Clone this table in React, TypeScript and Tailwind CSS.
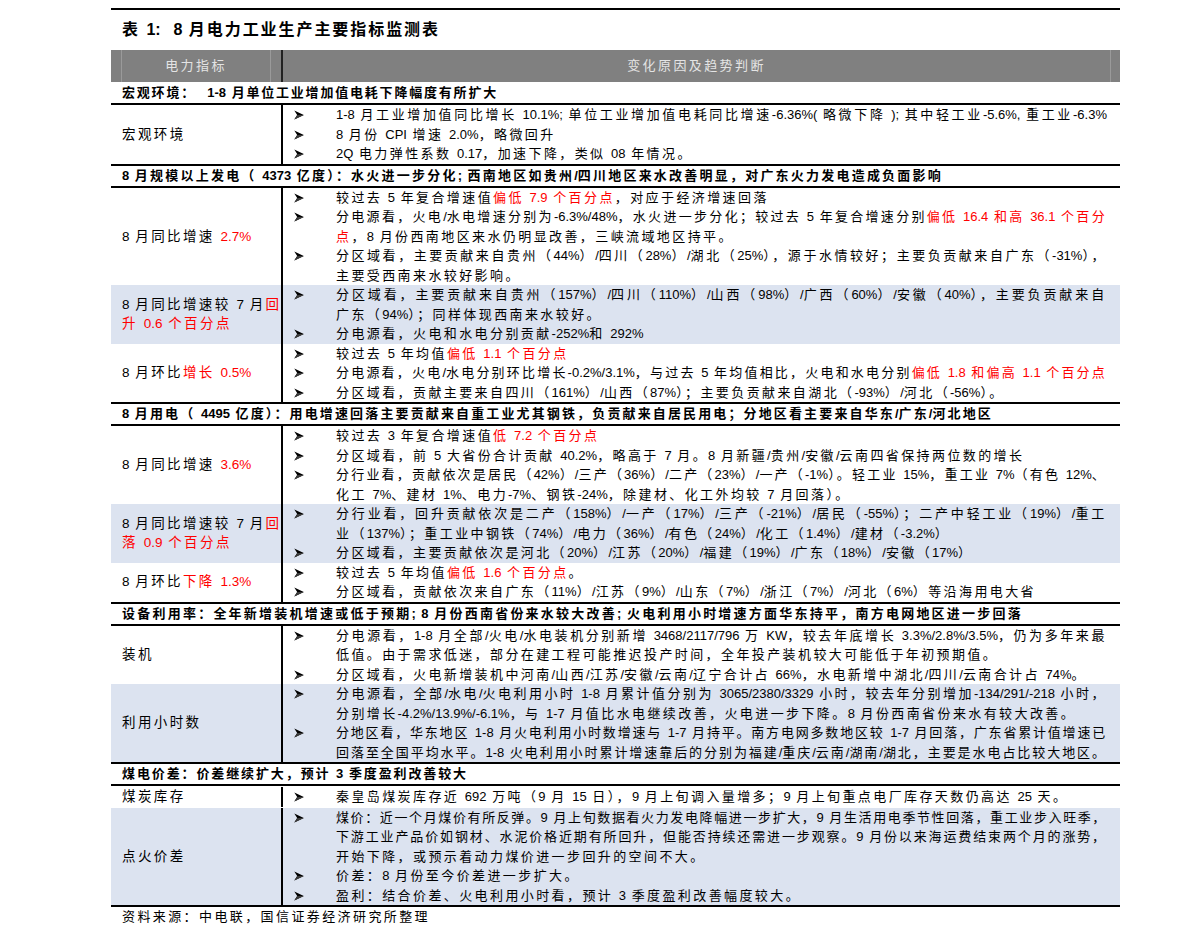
import React, { useLayoutEffect, useRef, useState } from "react";

// one visual line per string; {…} marks red text, a leading "|" marks a line
// that runs to the right edge of the column (justified like the PDF)
type Row = {
  left: string[];
  bullets: string[][];
  blue?: boolean;
  pad?: boolean;
};

type Block = { head: string; w: number; first?: boolean; rows: Row[] };
type Kind = "body" | "fit";

const CJK = /([\u2E80-\u9FFF\u3000-\u303F\uFF00-\uFFEF]+)/;
const CJK_G = /[\u2E80-\u9FFF\u3000-\u303F\uFF00-\uFFEF]/g;

function Run({ text, kind }: { text: string; kind: Kind }) {
  const parts = text.split(CJK);
  return (
    <>
      {parts.map((p, i) =>
        i % 2 === 1 ? (
          <span key={i} className={kind === "fit" ? "tracking-[var(--ls)]" : "tracking-[2.4px]"}>
            {p}
          </span>
        ) : (
          <span key={i}>{p}</span>
        )
      )}
    </>
  );
}

function Text({ text, kind = "body" }: { text: string; kind?: Kind }) {
  const parts = text.split(/\{([^}]*)\}/);
  return (
    <span>
      {parts.map((p, i) =>
        i % 2 === 1 ? (
          <span key={i} className="text-[#ff0000]">
            <Run text={p} kind={kind} />
          </span>
        ) : (
          <Run key={i} text={p} kind={kind} />
        )
      )}
    </span>
  );
}

// stretches the spacing of the CJK characters so the line spans `target` px
function FitLine({ text, target }: { text: string; target: number }) {
  const ref = useRef<HTMLSpanElement>(null);
  const cur = useRef(2.4);
  const [ls, setLs] = useState(2.4);

  useLayoutEffect(() => {
    const n = (text.match(CJK_G) || []).length;
    const measure = () => {
      const el = ref.current;
      if (!el || !n) return;
      const w = el.getBoundingClientRect().width;
      const next = cur.current + (target - w) / n;
      if (Math.abs(next - cur.current) > 0.01) {
        cur.current = next;
        setLs(next);
      }
    };
    measure();
    document.fonts?.ready.then(measure);
  });

  return (
    <span
      ref={ref}
      className="inline-block whitespace-pre"
      style={{ ["--ls" as string]: `${ls}px` } as React.CSSProperties}
    >
      <Text text={text} kind="fit" />
    </span>
  );
}

function Line({ text }: { text: string }) {
  if (text.startsWith("|")) return <FitLine text={text.slice(1)} target={771} />;
  return <Text text={text} />;
}

function Arrow() {
  return (
    <svg width="10" height="10" viewBox="0 0 10 10" className="mt-[5px]">
      <path d="M0.3 0.6 L9.8 5 L0.3 9.4 L3.2 5 Z" fill="#000" />
      <path d="M3.2 5 L9.8 5 L0.3 9.4 Z" fill="#3a3a3a" />
    </svg>
  );
}

const blocks: Block[] = [
  {
    head: "宏观环境：  1-8 月单位工业增加值电耗下降幅度有所扩大",
    w: 376,
    first: true,
    rows: [
      {
        left: ["宏观环境"],
        bullets: [
          ["|1-8 月工业增加值同比增长 10.1%; 单位工业增加值电耗同比增速-6.36%( 略微下降 ); 其中轻工业-5.6%, 重工业-6.3%"],
          ["8 月份 CPI 增速 2.0%，略微回升"],
          ["2Q 电力弹性系数 0.17，加速下降，类似 08 年情况。"],
        ],
      },
    ],
  },
  {
    head: "8 月规模以上发电（ 4373 亿度）：水火进一步分化; 西南地区如贵州/四川地区来水改善明显，对广东火力发电造成负面影响",
    w: 821,
    rows: [
      {
        left: ["8 月同比增速 {2.7%}"],
        bullets: [
          ["较过去 5 年复合增速值{偏低 7.9 个百分点}，对应于经济增速回落"],
          [
            "|分电源看，火电/水电增速分别为-6.3%/48%，水火进一步分化；较过去 5 年复合增速分别{偏低 16.4 和高 36.1 个百分}",
            "{点}，8 月份西南地区来水仍明显改善，三峡流域地区持平。",
          ],
          [
            "|分区域看，主要贡献来自贵州（44%）/四川（28%）/湖北（25%），源于水情较好；主要负贡献来自广东（-31%），",
            "主要受西南来水较好影响。",
          ],
        ],
      },
      {
        left: ["8 月同比增速较 7 月{回}", "{升 0.6 个百分点}"],
        blue: true,
        bullets: [
          [
            "|分区域看，主要贡献来自贵州（157%）/四川（110%）/山西（98%）/广西（60%）/安徽（40%），主要负贡献来自",
            "广东（94%）；同样体现西南来水较好。",
          ],
          ["分电源看，火电和水电分别贡献-252%和 292%"],
        ],
      },
      {
        left: ["8 月环比{增长 0.5%}"],
        bullets: [
          ["较过去 5 年均值{偏低 1.1 个百分点}"],
          ["|分电源看，火电/水电分别环比增长-0.2%/3.1%，与过去 5 年均值相比，火电和水电分别{偏低 1.8 和偏高 1.1 个百分点}"],
          ["分区域看，贡献主要来自四川（161%）/山西（87%）；主要负贡献来自湖北（-93%）/河北（-56%）。"],
        ],
      },
    ],
  },
  {
    head: "8 月用电（ 4495 亿度）：用电增速回落主要贡献来自重工业尤其钢铁，负贡献来自居民用电；分地区看主要来自华东/广东/河北地区",
    w: 871,
    rows: [
      {
        left: ["8 月同比增速 {3.6%}"],
        bullets: [
          ["较过去 3 年复合增速值{低 7.2  个百分点}"],
          ["分区域看，前 5 大省份合计贡献 40.2%，略高于 7 月。8 月新疆/贵州/安徽/云南四省保持两位数的增长"],
          [
            "|分行业看，贡献依次是居民（42%）/三产（36%）/二产（23%）/一产（-1%）。轻工业 15%，重工业 7%（有色 12%、",
            "化工 7%、建材 1%、电力-7%、钢铁-24%，除建材、化工外均较 7 月回落）。",
          ],
        ],
      },
      {
        left: ["8 月同比增速较 7 月{回}", "{落 0.9 个百分点}"],
        blue: true,
        bullets: [
          [
            "|分行业看，回升贡献依次是二产（158%）/一产（17%）/三产（-21%）/居民（-55%）；二产中轻工业（19%）/重工",
            "业（137%）；重工业中钢铁（74%）/电力（36%）/有色（24%）/化工（1.4%）/建材（-3.2%）",
          ],
          ["分区域看，主要贡献依次是河北（20%）/江苏（20%）/福建（19%）/广东（18%）/安徽（17%）"],
        ],
      },
      {
        left: ["8 月环比{下降 1.3%}"],
        bullets: [
          ["较过去 5 年均值{偏低 1.6 个百分点}。"],
          ["分区域看，贡献依次来自广东（11%）/江苏（9%）/山东（7%）/浙江（7%）/河北（6%）等沿海用电大省"],
        ],
      },
    ],
  },
  {
    head: "设备利用率：全年新增装机增速或低于预期; 8 月份西南省份来水较大改善; 火电利用小时增速方面华东持平，南方电网地区进一步回落",
    w: 901,
    rows: [
      {
        left: ["装机"],
        bullets: [
          [
            "|分电源看，1-8 月全部/火电/水电装机分别新增 3468/2117/796 万 KW，较去年底增长 3.3%/2.8%/3.5%，仍为多年来最",
            "低值。由于需求低迷，部分在建工程可能推迟投产时间，全年投产装机较大可能低于年初预期值。",
          ],
          ["分区域看，火电新增装机中河南/山西/江苏/安徽/云南/辽宁合计占 66%，水电新增中湖北/四川/云南合计占 74%。"],
        ],
      },
      {
        left: ["利用小时数"],
        blue: true,
        bullets: [
          [
            "|分电源看，全部/水电/火电利用小时 1-8 月累计值分别为 3065/2380/3329 小时，较去年分别增加-134/291/-218 小时，",
            "分别增长-4.2%/13.9%/-6.1%，与 1-7 月值比水电继续改善，火电进一步下降。8 月份西南省份来水有较大改善。",
          ],
          [
            "|分地区看，华东地区 1-8 月火电利用小时数增速与 1-7 月持平。南方电网多数地区较 1-7 月回落，广东省累计值增速已",
            "|回落至全国平均水平。1-8 火电利用小时累计增速靠后的分别为福建/重庆/云南/湖南/湖北，主要是水电占比较大地区。",
          ],
        ],
      },
    ],
  },
  {
    head: "煤电价差：价差继续扩大，预计 3 季度盈利改善较大",
    w: 346,
    rows: [
      {
        left: ["煤炭库存"],
        pad: true,
        bullets: [["秦皇岛煤炭库存近 692 万吨（9 月 15 日），9 月上旬调入量增多；9 月上旬重点电厂库存天数仍高达 25 天。"]],
      },
      {
        left: ["点火价差"],
        blue: true,
        bullets: [
          [
            "|煤价：近一个月煤价有所反弹。9 月上旬数据看火力发电降幅进一步扩大，9 月生活用电季节性回落，重工业步入旺季，",
            "|下游工业产品价如钢材、水泥价格近期有所回升，但能否持续还需进一步观察。9 月份以来海运费结束两个月的涨势，",
            "开始下降，或预示着动力煤价进一步回升的空间不大。",
          ],
          ["价差：8 月份至今价差进一步扩大。"],
          ["盈利：结合价差、火电利用小时看，预计 3 季度盈利改善幅度较大。"],
        ],
      },
    ],
  },
];

function DataRow({ row }: { row: Row }) {
  return (
    <div className={`flex ${row.blue ? "bg-[#dce3f0]" : ""} ${row.pad ? "py-[1px]" : ""}`}>
      <div className="flex w-[170px] shrink-0 flex-col justify-center pl-[11px]">
        {row.left.map((l, i) => (
          <div key={i} className="h-[19.5px] whitespace-nowrap text-[13.5px] leading-[19.5px]">
            <Text text={l} />
          </div>
        ))}
      </div>
      <div className="w-[2px] shrink-0 bg-black" />
      <div className="flex-1">
        {row.bullets.map((b, i) =>
          b.map((l, j) => (
            <div key={`${i}-${j}`} className="flex h-[19.5px] leading-[19.5px]">
              <div className="w-[53px] shrink-0 pl-[11px]">{j === 0 ? <Arrow /> : null}</div>
              <div className="whitespace-nowrap">
                <Line text={l} />
              </div>
            </div>
          ))
        )}
      </div>
    </div>
  );
}

export default function App() {
  return (
    <div className="min-h-[946px] bg-white font-['Liberation_Sans','Noto_Sans_CJK_SC',sans-serif] text-[13px] text-black [word-spacing:2px]">
      <div className="ml-[111px] w-[1009px] pt-[8px]">
        <div className="h-[2px] bg-black" />
        <div className="flex h-[40px] items-center pl-[11px] text-[16px] font-bold">
          <FitLine text="表 1:  8 月电力工业生产主要指标监测表" target={318} />
        </div>

        <div className="flex h-[32px] bg-[#808080] text-[#e4e4e4]">
          <div className="mx-[10px] flex w-[150px] shrink-0 items-center justify-center border-x border-[#9a9a9a]">
            <Text text="电力指标" />
          </div>
          <div className="w-[2px] shrink-0 bg-[#222]" />
          <div className="mr-[9px] flex flex-1 items-center justify-center border-r border-[#9a9a9a]">
            <Text text="变化原因及趋势判断" />
          </div>
        </div>

        {blocks.map((b, i) => (
          <div key={i}>
            <div
              className={`flex items-center pl-[11px] font-bold ${
                b.first ? "h-[23px] border-b-2 border-black" : "h-[24px] border-y-2 border-black"
              }`}
            >
              <FitLine text={b.head} target={b.w} />
            </div>
            {b.rows.map((r, j) => (
              <DataRow key={j} row={r} />
            ))}
          </div>
        ))}
        <div className="h-[2px] bg-black" />
        <div className="h-[20px] pl-[11px] leading-[20px]">
          <Text text="资料来源：中电联，国信证券经济研究所整理" />
        </div>
      </div>
    </div>
  );
}
